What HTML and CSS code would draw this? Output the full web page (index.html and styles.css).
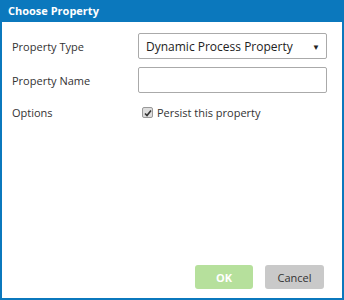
FILE: index.html
```html
<!DOCTYPE html>
<html>
    <head>
        <title>
            choose property
        </title>
        <link rel="stylesheet" href="styles.css">
    </head>
    <body>
        <div class="dialog">
            <div class="title">Choose Property</div>
            <div class="content">
                <div class="row">
                    <div class="label">Property Type</div>
                    <div class="select">
                        <span>Dynamic Process Property</span>
                        <span class="arrow">&#9660;</span>
                    </div>
                </div>
                <div class="row">
                    <div class="label">Property Name</div>
                    <div class="input"></div>
                </div>
                <div class="row options">
                    <div class="label">Options</div>
                    <div class="check">
                        <span class="box">
                            <svg width="8" height="8" viewBox="0 0 8 8">
                                <path d="M1 4.5 L3 6.5 L7 1.5" stroke="#333" stroke-width="1.6" fill="none"/>
                            </svg>
                        </span>
                        Persist this property
                    </div>
                </div>
            </div>
            <div class="buttons">
                <button class="ok">OK</button>
                <button class="cancel">Cancel</button>
            </div>
        </div>
    </body>
</html>
```

FILE: styles.css
```css
body{
    margin: 0;
    font-family: "Open Sans", "Noto Sans", sans-serif;
    font-size: 11px;
    color: #333;
}
.dialog{
    width: 344px;
    height: 300px;
    box-sizing: border-box;
    border: 2px solid #0b78bd;
    border-top: none;
    display: flex;
    flex-direction: column;
    background-color: white;
}
.title{
    background-color: #0b78bd;
    color: white;
    font-weight: bold;
    font-size: 11px;
    height: 22px;
    line-height: 22px;
    margin: 0 -2px;
    padding-left: 8px;
}
.content{
    flex: 1;
    padding: 11px 15px 0 10px;
    display: flex;
    flex-direction: column;
    row-gap: 8px;
}
.row{
    display: flex;
    align-items: center;
}
.label{
    width: 126px;
}
.select, .input{
    width: 189px;
    height: 26px;
    box-sizing: border-box;
    border: 1px solid #aaa;
    border-radius: 2px;
}
.select{
    display: flex;
    align-items: center;
    justify-content: space-between;
    padding: 0 6px 0 7px;
    font-size: 12px;
    color: #222;
}
.arrow{
    font-size: 8px;
}
.options{
    margin-top: 4px;
}
.check{
    display: flex;
    align-items: center;
    column-gap: 4px;
    padding-left: 4px;
}
.box{
    width: 9px;
    height: 9px;
    border: 1px solid #999;
    border-radius: 2px;
    background-color: #ddd;
    display: flex;
    align-items: center;
    justify-content: center;
}
.buttons{
    display: flex;
    justify-content: flex-end;
    column-gap: 12px;
    padding: 0 18px 9px 0;
}
button{
    border: none;
    border-radius: 3px;
    height: 24px;
    width: 58px;
    font-family: "Open Sans", "Noto Sans", sans-serif;
    font-size: 11px;
    padding: 0;
}
.ok{
    background-color: #b6e09c;
    color: white;
    font-weight: bold;
}
.cancel{
    background-color: #c9c9c9;
    color: #333;
    width: 59px;
}
```
